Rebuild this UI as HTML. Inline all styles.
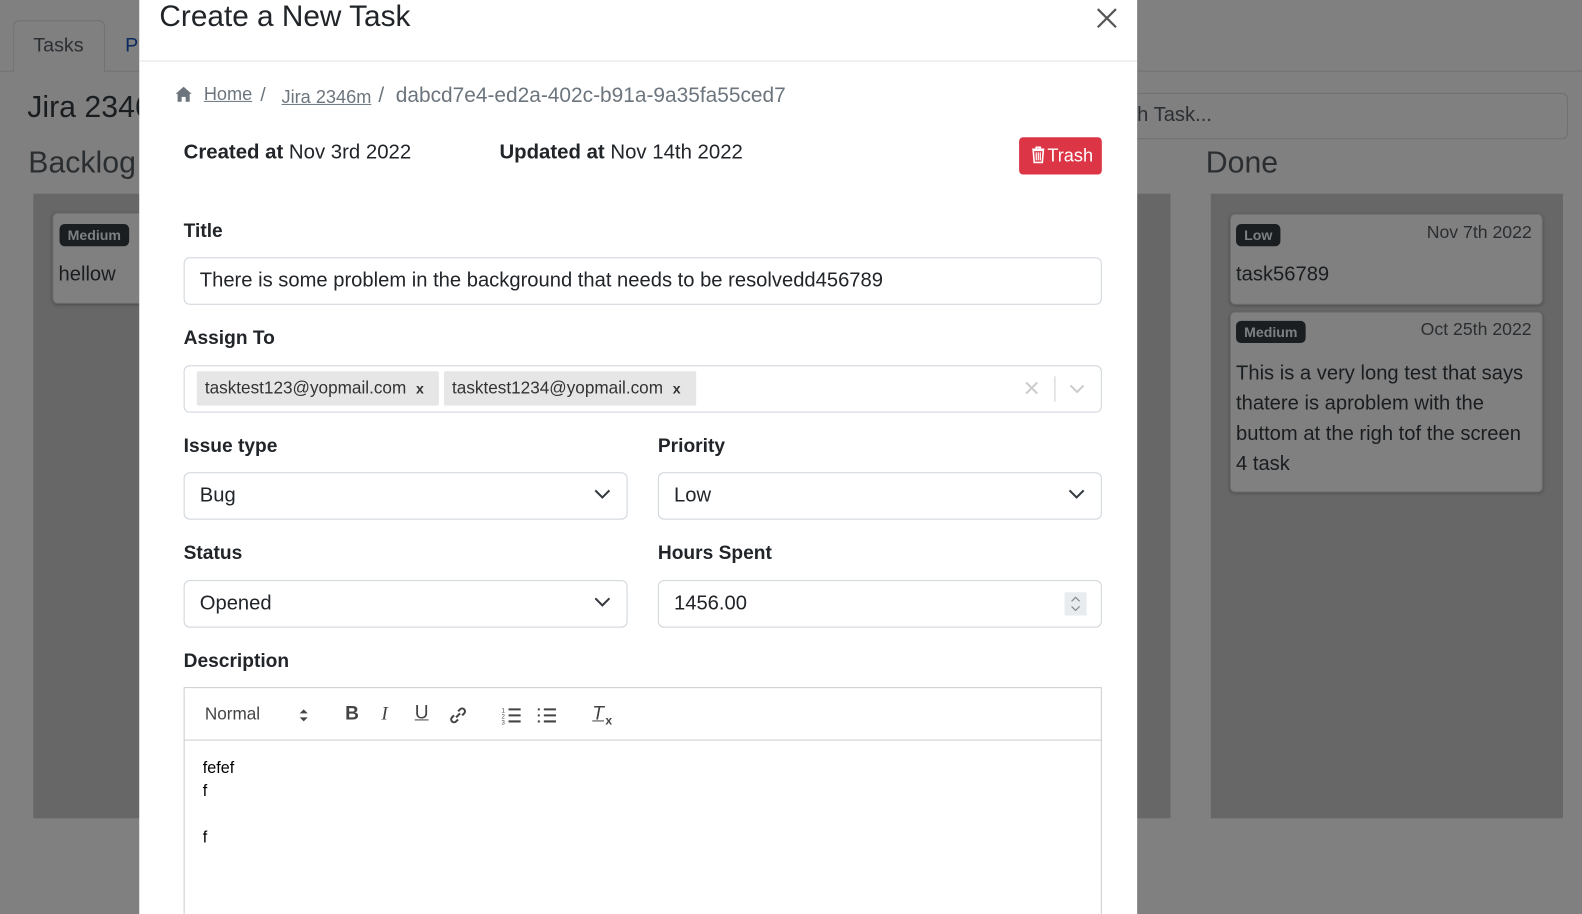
<!DOCTYPE html>
<html style="overflow:hidden;width:1582px;height:914px"><head><meta charset="utf-8"><style>
*{box-sizing:border-box;margin:0;padding:0}
body{width:1582px;height:914px;overflow:hidden;background:#808080;font-family:"Liberation Sans",sans-serif;color:#212529;position:relative}
#w{position:absolute;left:0;top:0;width:1582px;height:914px;transform:scale(1.009);transform-origin:0 0}
.a{position:absolute}
.bgt{color:#1a1d20}
.col{background:#676767}
.card{background:#808080;border:1px solid #707070;border-radius:5px;box-shadow:0 1px 3px rgba(0,0,0,.25)}
.badge{background:#1b1e21;color:#7d8084;font-size:14px;font-weight:bold;border-radius:5px;padding:3px 8px}
.modal{left:138px;top:0;width:989px;height:914px;background:#fff;overflow:hidden}
.lb{font-weight:bold;font-size:19px;color:#212529}
.inp{border:1px solid #ced4da;border-radius:6px;height:47px;font-size:20px;padding:0 15px;line-height:45px;color:#212529;background:#fff}
.chev{position:absolute;right:16px;top:16px}
</style></head><body><div id="w">
<div class="a" style="left:0;top:70px;width:1582px;height:1px;background:#707070"></div>
<div class="a" style="left:13px;top:20px;width:91px;height:52px;border:1px solid #707070;border-bottom:none;border-radius:6px 6px 0 0;background:#808080"></div>
<div class="a" style="left:33px;top:34px;font-size:19.5px;color:#2b2f33">Tasks</div>
<div class="a" style="left:124px;top:34px;font-size:19.5px;color:#0a2a60">P</div>
<div class="a bgt" style="left:27px;top:90px;font-size:30px">Jira 2346m</div>
<div class="a" style="left:28px;top:145px;font-size:30px;color:#2b2e31">Backlog</div>
<div class="a col" style="left:33px;top:192px;width:130px;height:619px"></div>
<div class="a card" style="left:52px;top:211px;width:110px;height:90px"></div>
<div class="a badge" style="left:59px;top:222px">Medium</div>
<div class="a bgt" style="left:58px;top:261px;font-size:20px">hellow</div>
<div class="a col" style="left:1127px;top:192px;width:33px;height:619px"></div>
<div class="a" style="left:1120px;top:92px;width:434px;height:46px;border:1px solid #707070;border-radius:6px"></div>
<div class="a" style="left:1127px;top:103px;font-size:20px;color:#2b2f33">h Task...</div>
<div class="a" style="left:1195px;top:145px;font-size:30px;color:#2b2e31">Done</div>
<div class="a col" style="left:1200px;top:192px;width:349px;height:619px"></div>
<div class="a card" style="left:1219px;top:212px;width:310px;height:90px"></div>
<div class="a badge" style="left:1225px;top:222px">Low</div>
<div class="a" style="left:1414px;top:220px;font-size:17.5px;color:#2b2e31">Nov 7th 2022</div>
<div class="a bgt" style="left:1225px;top:261px;font-size:20px">task56789</div>
<div class="a card" style="left:1219px;top:309px;width:310px;height:179px"></div>
<div class="a badge" style="left:1225px;top:318px">Medium</div>
<div class="a" style="left:1408px;top:316px;font-size:17.5px;color:#2b2e31">Oct 25th 2022</div>
<div class="a bgt" style="left:1225px;top:355px;font-size:20px;line-height:30px;width:310px;white-space:nowrap">This is a very long test that says<br>thatere is aproblem with the<br>buttom at the righ tof the screen<br>4 task</div>

<div class="a modal">
 <div class="a" style="left:20px;top:0;font-size:29.5px;color:#212529">Create a New Task</div>
 <svg class="a" style="left:949px;top:8px" width="20" height="20" viewBox="0 0 20 20"><path d="M1 1L19 19M19 1L1 19" stroke="#555" stroke-width="2.2"/></svg>
 <div class="a" style="left:0;top:60px;width:989px;height:1px;background:#dee2e6"></div>
 <svg class="a" style="left:36px;top:86px" width="16" height="15" viewBox="0 0 16 15"><path d="M8 0L0 7h2v8h4v-5h4v5h4V7h2z" fill="#6c757d"/></svg>
 <div class="a" style="left:64px;top:83px;font-size:18px;color:#6c757d;text-decoration:underline">Home</div>
 <div class="a" style="left:120px;top:84px;font-size:19px;color:#6c757d">/</div>
 <div class="a" style="left:141px;top:86px;font-size:18px;color:#6c757d;text-decoration:underline">Jira 2346m</div>
 <div class="a" style="left:237px;top:83px;font-size:20.7px;color:#6c757d">/ &nbsp;dabcd7e4-ed2a-402c-b91a-9a35fa55ced7</div>
 <div class="a" style="left:44px;top:140px;font-size:20.2px"><b>Created at</b> Nov 3rd 2022</div>
 <div class="a" style="left:357px;top:140px;font-size:20.2px"><b>Updated at</b> Nov 14th 2022</div>
 <div class="a" style="left:872px;top:136px;width:82px;height:37px;background:#dc3545;border-radius:4px;color:#fff;font-size:18px;line-height:37px;padding-left:28px">Trash</div>
 <svg class="a" style="left:884px;top:145px" width="14" height="17" viewBox="0 0 14 17"><path d="M1 3h12M5 3V1h4v2M2 4h10l-1 12H3z" stroke="#fff" stroke-width="1.6" fill="none"/><path d="M5 6v8M7 6v8M9 6v8" stroke="#fff" stroke-width="1.2"/></svg>
 <div class="a lb" style="left:44px;top:219px">Title</div>
 <div class="a inp" style="left:44px;top:255px;width:910px">There is some problem in the background that needs to be resolvedd456789</div>
 <div class="a lb" style="left:44px;top:325px">Assign To</div>
 <div class="a inp" style="left:44px;top:362px;width:910px;padding:0">
  <div class="a" style="left:12px;top:5px;height:34px;width:240px;background:#e6e6e6;border-radius:2px;font-size:17px;line-height:34px;padding-left:8px;color:#333;white-space:nowrap">tasktest123@yopmail.com <b style="margin-left:5px;font-size:14px">x</b></div>
  <div class="a" style="left:257px;top:5px;height:34px;width:250px;background:#e6e6e6;border-radius:2px;font-size:17px;line-height:34px;padding-left:8px;color:#333;white-space:nowrap">tasktest1234@yopmail.com <b style="margin-left:5px;font-size:14px">x</b></div>
  <svg class="a" style="left:833px;top:15px" width="13" height="13"><path d="M1 1L12 12M12 1L1 12" stroke="#ccc" stroke-width="2"/></svg>
  <div class="a" style="left:862px;top:10px;width:1px;height:25px;background:#ccc"></div>
  <svg class="a" style="left:877px;top:18px" width="15" height="9"><path d="M1 1l6.5 6.5L14 1" stroke="#ccc" stroke-width="2" fill="none"/></svg>
 </div>
 <div class="a lb" style="left:44px;top:432px">Issue type</div>
 <div class="a lb" style="left:514px;top:432px">Priority</div>
 <div class="a inp" style="left:44px;top:468px;width:440px">Bug<svg class="chev" width="16" height="10"><path d="M1 1l7 7 7-7" stroke="#343a40" stroke-width="2" fill="none"/></svg></div>
 <div class="a inp" style="left:514px;top:468px;width:440px">Low<svg class="chev" width="16" height="10"><path d="M1 1l7 7 7-7" stroke="#343a40" stroke-width="2" fill="none"/></svg></div>
 <div class="a lb" style="left:44px;top:538px">Status</div>
 <div class="a lb" style="left:514px;top:538px">Hours Spent</div>
 <div class="a inp" style="left:44px;top:575px;width:440px">Opened<svg class="chev" width="16" height="10"><path d="M1 1l7 7 7-7" stroke="#343a40" stroke-width="2" fill="none"/></svg></div>
 <div class="a inp" style="left:514px;top:575px;width:440px">1456.00
  <div class="a" style="left:402px;top:11px;width:22px;height:23px;background:#e9ecef"><svg width="22" height="23" style="display:block"><path d="M7 9l4-4 4 4M7 14l4 4 4-4" stroke="#888" stroke-width="1.2" fill="none"/></svg></div></div>
 <div class="a lb" style="left:44px;top:645px">Description</div>
 <div class="a" style="left:44px;top:681px;width:910px;height:260px;border:1px solid #ccc"></div>
 <div class="a" style="left:44px;top:733px;width:910px;height:1px;background:#ccc"></div>
 <div class="a" style="left:65px;top:698px;font-size:17px;color:#444">Normal</div>
 <svg class="a" style="left:158px;top:702px" width="10" height="14"><path d="M1 5l4-4 4 4zM1 9l4 4 4-4z" fill="#444"/></svg>
 <div class="a" style="left:204px;top:697px;font-size:19px;font-weight:bold;color:#444">B</div>
 <div class="a" style="left:240px;top:697px;font-size:19px;font-style:italic;font-family:'Liberation Serif',serif;color:#444">I</div>
 <div class="a" style="left:273px;top:696px;font-size:19px;text-decoration:underline;color:#444">U</div>
 <svg class="a" style="left:307px;top:700px" width="18" height="18" viewBox="0 0 18 18"><path d="M7 11l4-4M5 9l-2 2a2.8 2.8 0 004 4l2-2M13 9l2-2a2.8 2.8 0 00-4-4L9 5" stroke="#444" stroke-width="2" fill="none"/></svg>
 <svg class="a" style="left:359px;top:700px" width="20" height="18"><path d="M7 3h12M7 9h12M7 15h12" stroke="#444" stroke-width="2"/><text x="0" y="6" font-size="6" fill="#444">1</text><text x="0" y="12" font-size="6" fill="#444">2</text><text x="0" y="18" font-size="6" fill="#444">3</text></svg>
 <svg class="a" style="left:394px;top:700px" width="20" height="18"><path d="M7 3h12M7 9h12M7 15h12M1 3h2M1 9h2M1 15h2" stroke="#444" stroke-width="2"/></svg>
 <div class="a" style="left:449px;top:697px;font-size:19px;font-style:italic;color:#444;text-decoration:underline">T</div>
 <div class="a" style="left:462px;top:707px;font-size:12px;font-weight:bold;color:#444">x</div>
 <div class="a" style="left:63px;top:750px;font-size:16px;line-height:23px;color:#000">fefef<br>f<br><br>f</div>
</div>
</div></body></html>
